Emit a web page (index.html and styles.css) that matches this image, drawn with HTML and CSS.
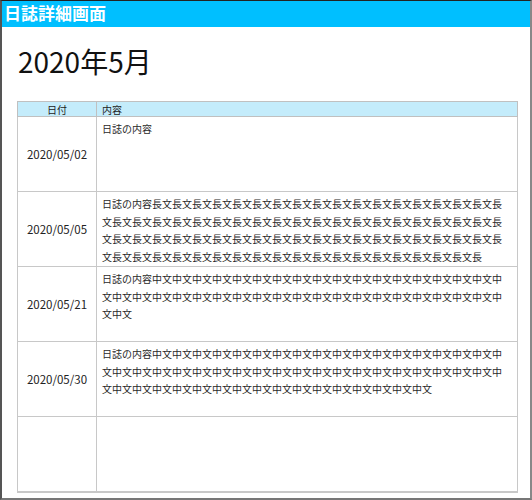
FILE: index.html
```html
<!DOCTYPE html>
<html lang="ja">
<head>
<meta charset="utf-8">
<title>日誌詳細画面</title>
<link rel="stylesheet" href="styles.css">
</head>
<body>
<div class="window">
  <div class="titlebar">日誌詳細画面</div>
  <div class="main">
    <h1 class="month">2020年5月</h1>
    <table class="diary">
      <thead>
        <tr><th class="col-date">日付</th><th class="col-body">内容</th></tr>
      </thead>
      <tbody>
        <tr><td class="date">2020/05/02</td><td class="body"><div class="text">日誌の内容</div></td></tr>
        <tr><td class="date">2020/05/05</td><td class="body"><div class="text">日誌の内容長文長文長文長文長文長文長文長文長文長文長文長文長文長文長文長文長文長文長文長文長文長文長文長文長文長文長文長文長文長文長文長文長文長文長文長文長文長文長文長文長文長文長文長文長文長文長文長文長文長文長文長文長文長文長文長文長文長文長文長文長文長文長文長文長文長文長文長文長文長文長文長文長文長文長文長文長</div></td></tr>
        <tr><td class="date">2020/05/21</td><td class="body"><div class="text">日誌の内容中文中文中文中文中文中文中文中文中文中文中文中文中文中文中文中文中文中文中文中文中文中文中文中文中文中文中文中文中文中文中文中文中文中文中文中文中文中文中文</div></td></tr>
        <tr><td class="date">2020/05/30</td><td class="body"><div class="text">日誌の内容中文中文中文中文中文中文中文中文中文中文中文中文中文中文中文中文中文中文中文中文中文中文中文中文中文中文中文中文中文中文中文中文中文中文中文中文中文中文中文中文中文中文中文中文中文中文中文中文中文中文中文中文中文中文</div></td></tr>
        <tr class="last"><td class="date"></td><td class="body"><div class="text"></div></td></tr>
      </tbody>
    </table>
  </div>
</div>
</body>
</html>
```
FILE: styles.css
```css
html, body {
  margin: 0;
  padding: 0;
  background: #ffffff;
}
body {
  font-family: "Noto Sans CJK JP", "Noto Sans", sans-serif;
  color: #222;
}
.window {
  width: 532px;
  height: 500px;
  box-sizing: border-box;
  border-top: 1px solid #222;
  border-left: 2px solid #555;
  border-right: 2px solid #888;
  border-bottom: 2px solid #777;
  display: flex;
  flex-direction: column;
  overflow: hidden;
}
.titlebar {
  height: 26px;
  background: #00bfff;
  color: #ffffff;
  font-size: 17px;
  font-weight: bold;
  line-height: 24px;
  padding-left: 2px;
  flex: none;
}
.main {
  padding: 0 0 0 15px;
}
.month {
  margin: 15px 0 0 1px;
  height: 59px;
  font-size: 28px;
  font-weight: normal;
  line-height: 38px;
  color: #111;
}
.diary {
  border-collapse: collapse;
  width: 501px;
  table-layout: fixed;
  font-size: 10px;
}
.diary th {
  background: #c4ecfb;
  border: 1px solid #c0c0c0;
  font-weight: normal;
  height: 14px;
  line-height: 13px;
  padding: 0;
  color: #222;
}
.col-date {
  width: 78px;
  text-align: center;
}
.col-body {
  text-align: left;
  padding-left: 5px !important;
}
.diary td {
  border: 1px solid #c8c8c8;
  height: 75px;
  padding: 0;
  box-sizing: border-box;
}
.date {
  text-align: center;
  vertical-align: middle;
  font-size: 11.5px;
  color: #222;
}
.body {
  vertical-align: top;
  padding-left: 5px !important;
}
.text {
  width: 405px;
  height: 73px;
  overflow: hidden;
  line-height: 17.5px;
  padding-top: 3px;
  box-sizing: border-box;
  word-break: break-all;
  color: #2a2a2a;
}
.last td {
  border-bottom: 2px solid #c8c8c8;
}
```
